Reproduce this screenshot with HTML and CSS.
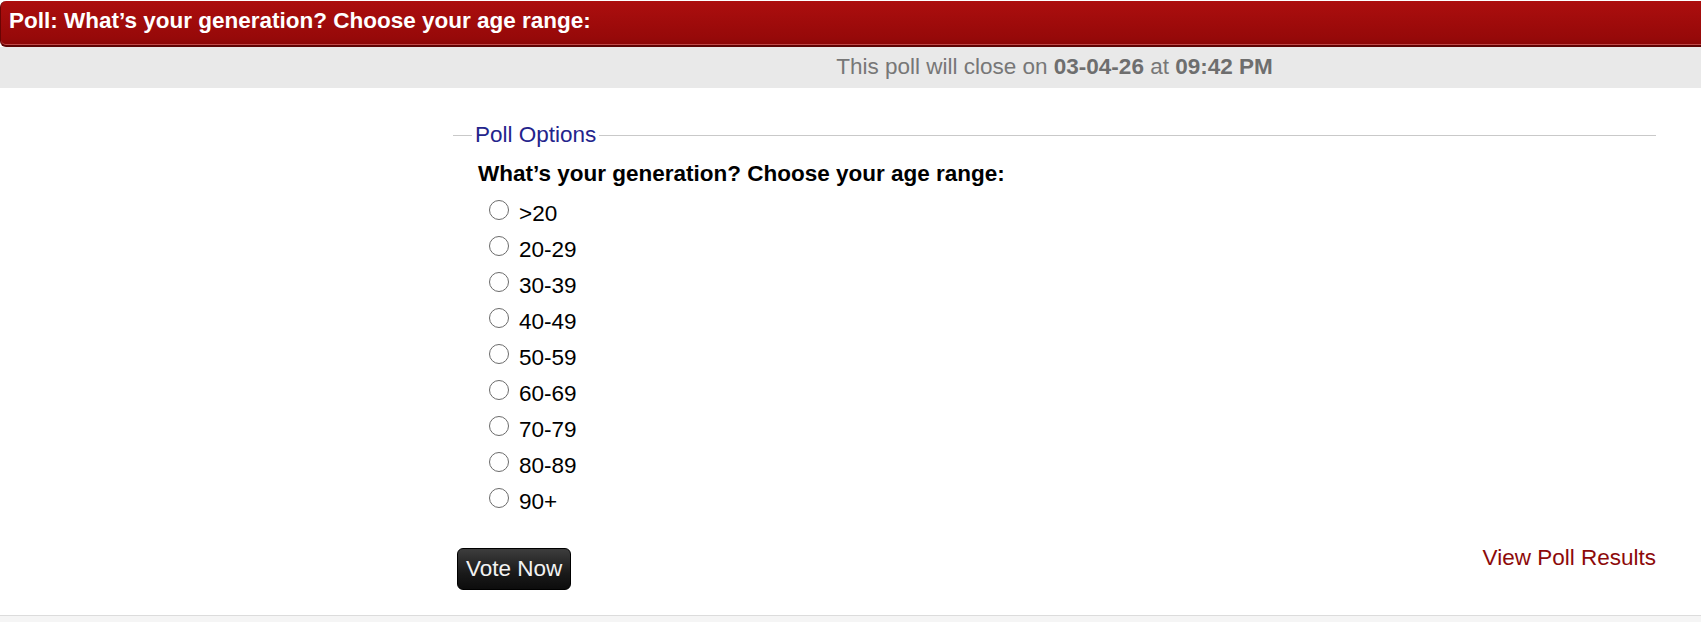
FILE: index.html
```html
<!DOCTYPE html>
<html lang="en">
<head>
<meta charset="utf-8">
<title>Poll</title>
<link rel="stylesheet" href="styles.css">
</head>
<body>
<div class="poll-head">Poll: What’s your generation? Choose your age range:</div>
<div class="close-bar">
  <div class="close-spacer"></div>
  <div class="close-text">This poll will close on <b>03-04-26</b> at <b>09:42 PM</b></div>
</div>
<div class="poll-body">
  <div class="side"></div>
  <form class="poll-form">
    <fieldset class="poll-fieldset">
      <legend class="poll-legend">Poll Options</legend>
      <div class="question">What’s your generation? Choose your age range:</div>
      <ul class="options">
        <li class="option"><input class="radio" type="radio" name="age"><span>&gt;20</span></li>
        <li class="option"><input class="radio" type="radio" name="age"><span>20-29</span></li>
        <li class="option"><input class="radio" type="radio" name="age"><span>30-39</span></li>
        <li class="option"><input class="radio" type="radio" name="age"><span>40-49</span></li>
        <li class="option"><input class="radio" type="radio" name="age"><span>50-59</span></li>
        <li class="option"><input class="radio" type="radio" name="age"><span>60-69</span></li>
        <li class="option"><input class="radio" type="radio" name="age"><span>70-79</span></li>
        <li class="option"><input class="radio" type="radio" name="age"><span>80-89</span></li>
        <li class="option"><input class="radio" type="radio" name="age"><span>90+</span></li>
      </ul>
    </fieldset>
    <div class="actions">
      <button type="button" class="vote-btn">Vote Now</button>
      <a class="results-link" href="#">View Poll Results</a>
    </div>
  </form>
</div>
<div class="page-foot"></div>
</body>
</html>
```
FILE: styles.css
```css
html, body {
  margin: 0;
  padding: 0;
  background: #ffffff;
}
body {
  font-family: "Liberation Sans", Arial, sans-serif;
  font-size: 22.5px;
  color: #000;
  padding-top: 1px;
}
.poll-head {
  height: 37px;
  padding: 7px 0 0 8px;
  background: linear-gradient(#ac0e0e, #960909 85%, #8c0707);
  color: #fff;
  font-weight: bold;
  border-left: 1px solid #6a0404;
  border-bottom: 2px solid #5e0404;
  box-shadow: inset 0 -1px 0 #c04a4a;
  border-radius: 6px 0 0 6px;
  white-space: nowrap;
}
.close-bar {
  display: grid;
  grid-template-columns: 453px 1fr;
  padding-right: 45px;
  height: 41px;
  background: #e9e9e9;
}
.close-text {
  padding-top: 7px;
  text-align: center;
  color: #777;
}
.close-text b {
  color: #6e6e6e;
}
.poll-body {
  display: grid;
  grid-template-columns: 453px 1fr;
  padding-right: 45px;
  height: 527px;
}
.poll-form {
  padding-top: 34px;
}
.poll-fieldset {
  margin: 0;
  padding: 0 0 0 25px;
  border: 0;
  border-top: 1px solid #c9c9c9;
  min-width: 0;
}
.poll-legend {
  padding: 0 3px;
  margin-left: -6px;
  color: #24248c;
}
.question {
  font-weight: bold;
  margin-top: 13px;
  line-height: 26px;
}
.options {
  list-style: none;
  margin: 9px 0 0 0;
  padding: 0 0 0 11px;
}
.option {
  display: flex;
  align-items: center;
  height: 36px;
}
.radio {
  appearance: none;
  -webkit-appearance: none;
  width: 20px;
  height: 20px;
  margin: 0 10px 8px 0;
  border: 1.5px solid #6b6b6b;
  border-radius: 50%;
  background: #fff;
  box-sizing: border-box;
  flex: none;
}
.actions {
  display: flex;
  justify-content: space-between;
  align-items: flex-start;
  margin-top: 25px;
}
.vote-btn {
  margin: 3px 0 0 4px;
  height: 42px;
  padding: 0 8px;
  font-family: "Liberation Sans", Arial, sans-serif;
  font-size: 22.5px;
  color: #f2f2f2;
  background: linear-gradient(#3d3d3d, #1a1a1a 60%, #0c0c0c);
  border: 1px solid #000;
  border-radius: 6px;
}
.results-link {
  color: #8d0a0a;
  text-decoration: none;
  line-height: 26px;
}
.page-foot {
  border-top: 1px solid #dcdcdc;
  background: #f5f5f5;
  height: 20px;
}
```
